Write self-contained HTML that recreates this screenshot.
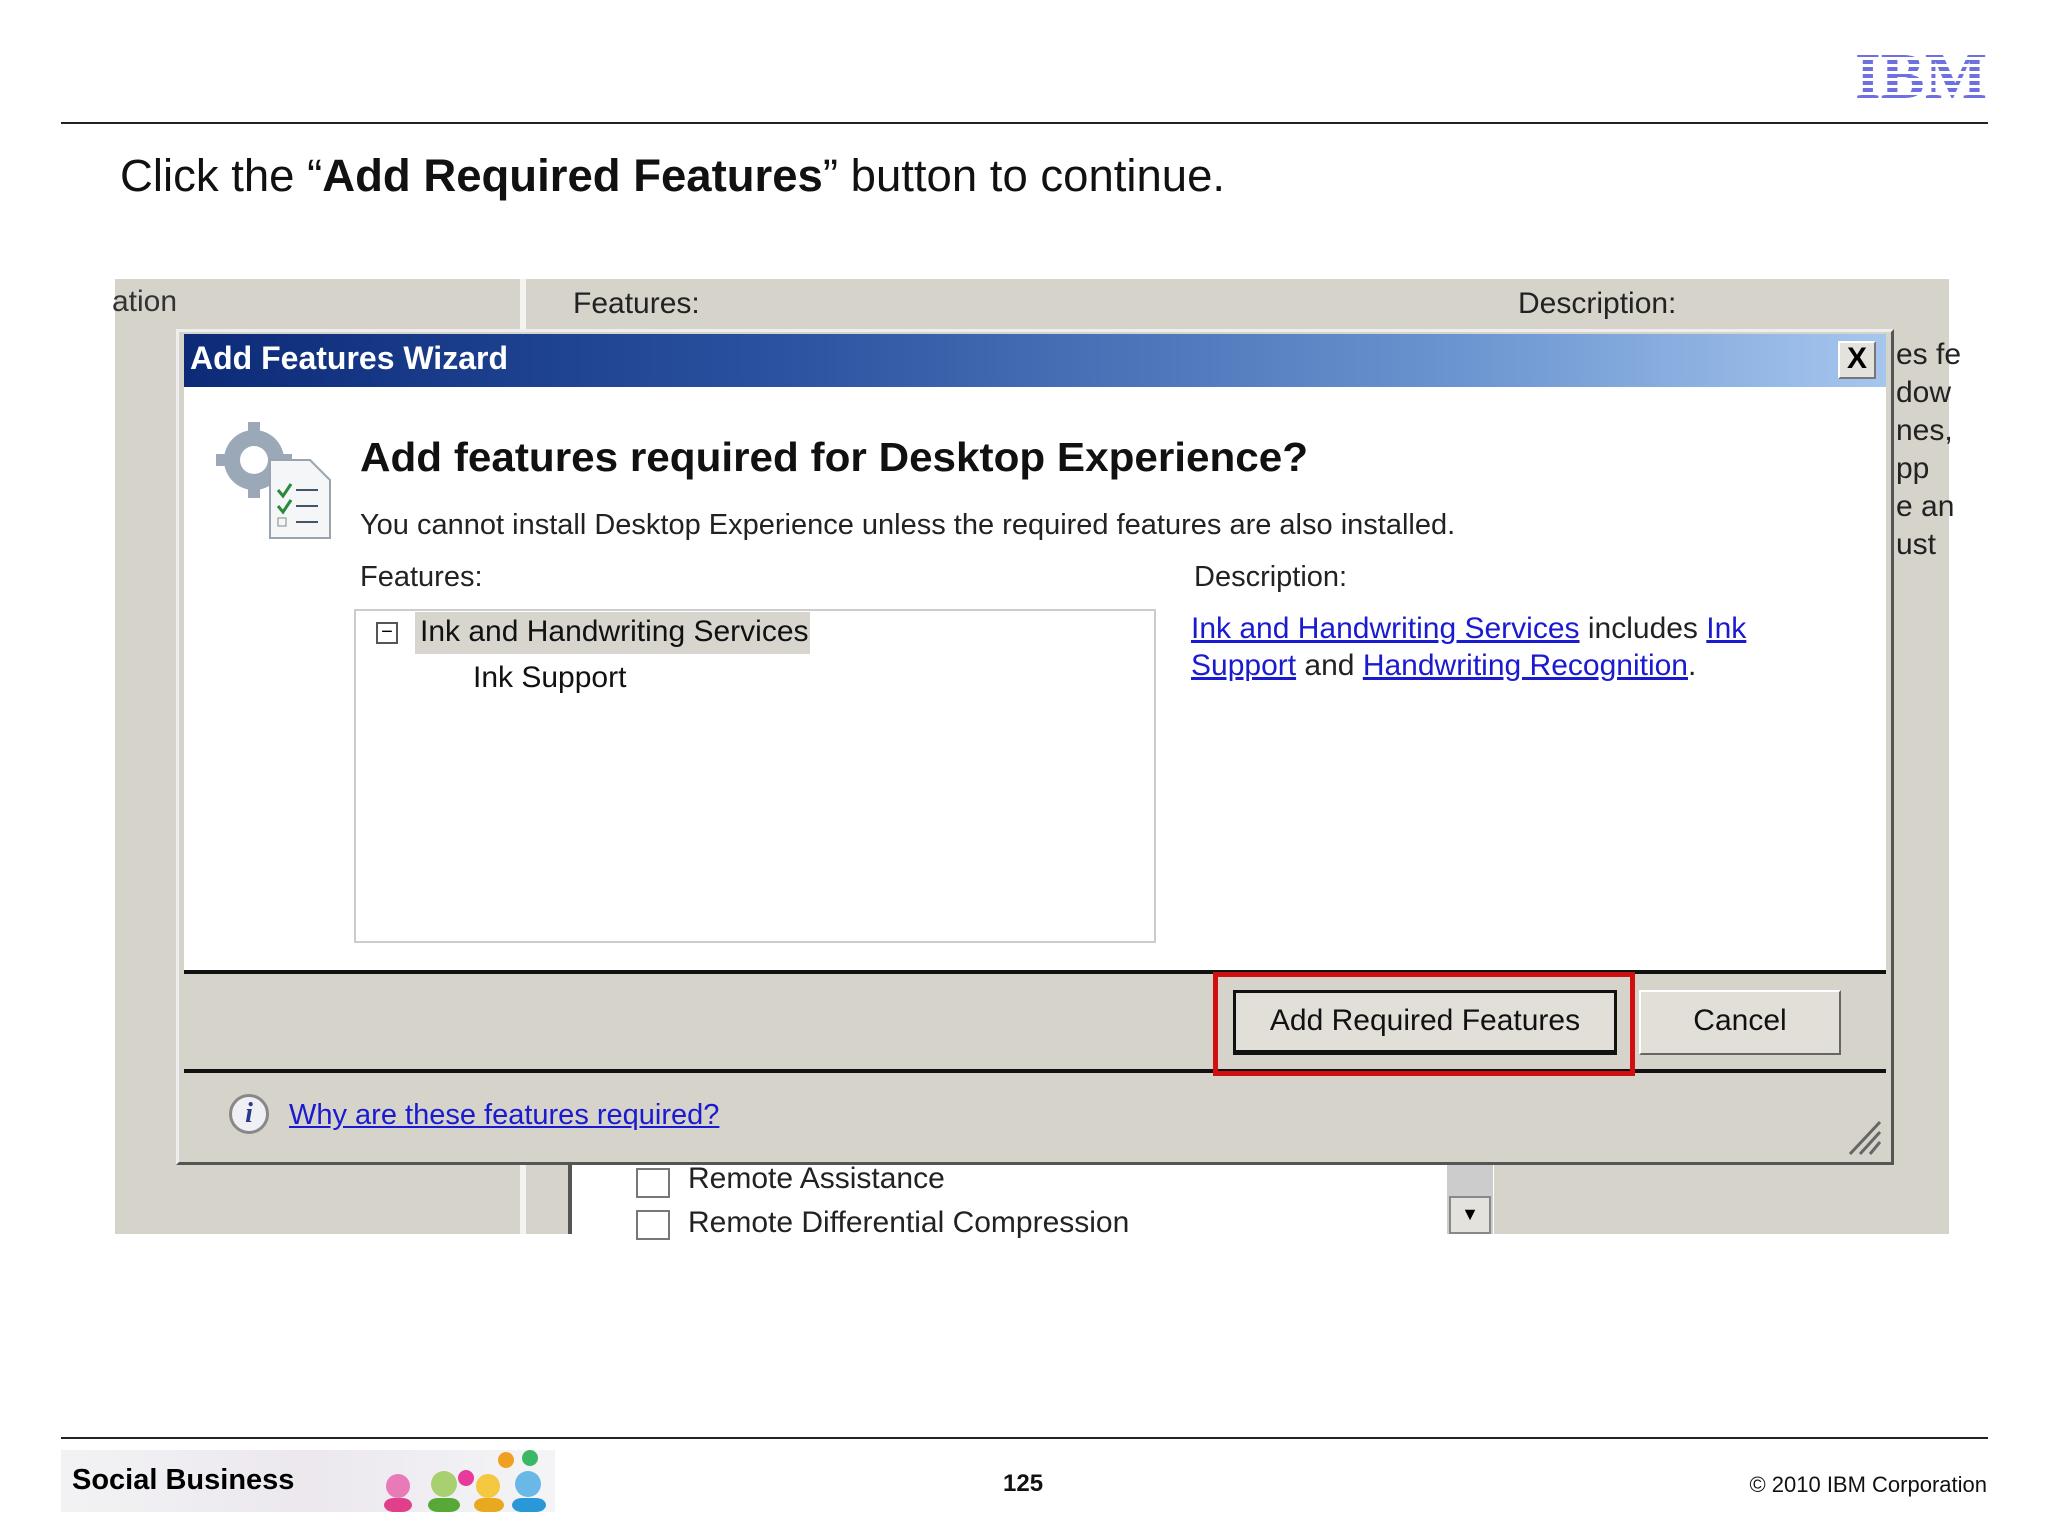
<!DOCTYPE html>
<html><head><meta charset="utf-8"><style>
*{margin:0;padding:0;box-sizing:border-box}
body{width:2048px;height:1536px;background:#fff;position:relative;overflow:hidden;font-family:"Liberation Sans",sans-serif}
.a{position:absolute;white-space:nowrap}
.t{font-family:"Liberation Sans Narrow","Liberation Sans",sans-serif}
.lk{color:#1a1ad0;text-decoration:underline}
</style></head><body>
<!-- IBM logo -->
<div class="a" style="left:1855px;top:46px;font:bold 66px/62px 'Liberation Serif',serif;color:#6e70e2;letter-spacing:0px;transform:scaleX(1.0);transform-origin:left">IBM</div>
<div class="a" style="left:1850px;top:50px;width:145px;height:56px;background:repeating-linear-gradient(#fff 0 3px,transparent 3px 7px)"></div>
<div class="a" style="left:61px;top:122px;width:1927px;height:2px;background:#222"></div>
<div class="a" style="left:120px;top:150px;font-size:45.5px;color:#111">Click the “<b>Add Required Features</b>” button to continue.</div>

<!-- screenshot background -->
<div class="a" style="left:115px;top:279px;width:1834px;height:955px;background:#d6d3cb"></div>
<div class="a" style="left:520px;top:279px;width:6px;height:955px;background:#f4f3ef"></div>
<div class="a t" style="left:112px;top:285px;font-size:30px;color:#333">ation</div>
<div class="a t" style="left:573px;top:287px;font-size:30px;color:#222">Features:</div>
<div class="a t" style="left:1518px;top:287px;font-size:30px;color:#222">Description:</div>
<div class="a t" style="left:1896px;top:336px;font-size:30px;line-height:38px;color:#222;white-space:pre">es fe
dow
nes,
pp
e an
ust</div>
<div class="a" style="left:1890px;top:330px;width:4px;height:230px;background:#555"></div>
<!-- lower list -->
<div class="a" style="left:568px;top:1160px;width:926px;height:74px;background:#fff;border-left:4px solid #555"></div>
<div class="a" style="left:636px;top:1168px;width:34px;height:30px;border:2px solid #777;background:#fff"></div>
<div class="a t" style="left:688px;top:1162px;font-size:30px;color:#222">Remote Assistance</div>
<div class="a" style="left:636px;top:1210px;width:34px;height:30px;border:2px solid #777;background:#fff"></div>
<div class="a t" style="left:688px;top:1206px;font-size:30px;color:#222">Remote Differential Compression</div>
<div class="a" style="left:1447px;top:1160px;width:46px;height:74px;background:#ccc"></div>
<div class="a" style="left:1449px;top:1196px;width:42px;height:38px;background:#e4e2dc;border:2px solid #888;font-size:18px;text-align:center;line-height:32px">▼</div>

<!-- dialog -->
<div class="a" style="left:176px;top:329px;width:1718px;height:836px;background:#d6d3cb;border:3px solid #555;border-top-color:#eee;border-left-color:#eee"></div>
<div class="a" style="left:184px;top:334px;width:1702px;height:53px;background:linear-gradient(90deg,#0c2a78 0%,#2a52a0 35%,#6b95d0 75%,#a6c6ee 100%)"></div>
<div class="a t" style="left:190px;top:340px;font-size:32px;font-weight:bold;color:#fff">Add Features Wizard</div>
<div class="a" style="left:1838px;top:341px;width:38px;height:38px;background:#e4e2dc;border:2px solid #777;border-top-color:#fff;border-left-color:#fff;font:bold 30px/32px 'Liberation Sans',sans-serif;text-align:center">X</div>
<div class="a" style="left:184px;top:387px;width:1702px;height:584px;background:#fff"></div>
<!-- icon -->
<svg class="a" style="left:214px;top:420px" width="120" height="125" viewBox="0 0 120 125">
<circle cx="40" cy="40" r="30" fill="#9aa8b8"/><circle cx="40" cy="40" r="14" fill="#fff"/>
<g fill="#9aa8b8"><rect x="34" y="2" width="12" height="12"/><rect x="34" y="66" width="12" height="12"/><rect x="2" y="34" width="12" height="12"/><rect x="66" y="34" width="12" height="12"/></g>
<path d="M56 40 H96 L116 60 V118 H56 Z" fill="#f4f6f8" stroke="#9aa4b0" stroke-width="2"/>
<path d="M64 70 l5 6 l8 -12 M64 86 l5 6 l8 -12" stroke="#2a8a3a" stroke-width="3" fill="none"/>
<rect x="64" y="98" width="8" height="8" fill="none" stroke="#888"/>
<path d="M82 70 H104 M82 86 H104 M82 102 H104" stroke="#456" stroke-width="2"/>
</svg>
<div class="a t" style="left:360px;top:434px;font-size:41px;font-weight:bold;color:#111;transform:scaleX(1.03);transform-origin:left">Add features required for Desktop Experience?</div>
<div class="a t" style="left:360px;top:509px;font-size:29px;color:#222">You cannot install Desktop Experience unless the required features are also installed.</div>
<div class="a t" style="left:360px;top:561px;font-size:29px;color:#222">Features:</div>
<div class="a t" style="left:1194px;top:561px;font-size:29px;color:#222">Description:</div>
<div class="a" style="left:354px;top:609px;width:802px;height:334px;border:2px solid #ccc;background:#fff"></div>
<div class="a" style="left:376px;top:622px;width:22px;height:22px;border:2px solid #555;font-size:20px;line-height:16px;text-align:center">−</div>
<div class="a" style="left:415px;top:612px;width:395px;height:42px;background:#d8d5ce"></div>
<div class="a t" style="left:420px;top:615px;font-size:30px;color:#111">Ink and Handwriting Services</div>
<div class="a t" style="left:473px;top:661px;font-size:30px;color:#111">Ink Support</div>
<div class="a t" style="left:1191px;top:610px;font-size:30px;line-height:37px;color:#222"><span class="lk">Ink and Handwriting Services</span> includes <span class="lk">Ink</span><br><span class="lk">Support</span> and <span class="lk">Handwriting Recognition</span>.</div>
<div class="a" style="left:184px;top:970px;width:1702px;height:4px;background:#111"></div>
<div class="a" style="left:184px;top:1069px;width:1702px;height:4px;background:#111"></div>
<!-- buttons -->
<div class="a t" style="left:1233px;top:990px;width:384px;height:65px;background:#e2dfd8;border:3px solid #111;border-bottom-width:5px;font-size:30px;line-height:56px;text-align:center;color:#111">Add Required Features</div>
<div class="a t" style="left:1639px;top:990px;width:202px;height:65px;background:#e2dfd8;border:2px solid #666;border-top-color:#fff;border-left-color:#fff;font-size:30px;line-height:58px;text-align:center;color:#111">Cancel</div>
<div class="a" style="left:1213px;top:972px;width:422px;height:104px;border:5px solid #d01010"></div>
<div class="a" style="left:229px;top:1094px;width:40px;height:40px;border:3px solid #888;border-radius:50%;background:#f0f0f4;font:bold italic 28px/34px 'Liberation Serif',serif;text-align:center;color:#2a3a8a">i</div>
<div class="a t" style="left:289px;top:1099px;font-size:29px" ><span class="lk">Why are these features required?</span></div>
<svg class="a" style="left:1846px;top:1116px" width="36" height="40"><path d="M4 38 L34 6 M14 38 L34 16 M24 38 L34 26" stroke="#666" stroke-width="3"/></svg>

<!-- footer -->
<div class="a" style="left:61px;top:1437px;width:1927px;height:2px;background:#222"></div>
<div class="a" style="left:61px;top:1450px;width:494px;height:62px;background:linear-gradient(90deg,#f2f2f4 0%,#ece8ee 50%,#f4f4f6 100%)"></div>
<svg class="a" style="left:370px;top:1450px" width="185" height="62">
<circle cx="28" cy="36" r="12" fill="#e87ab8"/><rect x="14" y="48" width="28" height="14" rx="10" fill="#e0408a"/>
<circle cx="74" cy="34" r="13" fill="#a8d070"/><rect x="58" y="48" width="32" height="14" rx="10" fill="#58a838"/>
<circle cx="118" cy="36" r="12" fill="#f4c840"/><rect x="104" y="48" width="30" height="14" rx="10" fill="#e8a820"/>
<circle cx="158" cy="34" r="13" fill="#6ab8e8"/><rect x="142" y="48" width="34" height="14" rx="10" fill="#2a98d8"/>
<circle cx="96" cy="28" r="8" fill="#e83a9a"/><circle cx="136" cy="10" r="8" fill="#f0a020"/><circle cx="160" cy="8" r="8" fill="#3ab868"/>
</svg>
<div class="a" style="left:72px;top:1464px;font-size:29px;font-weight:bold;color:#000">Social Business</div>
<div class="a" style="left:1003px;top:1470px;font-size:24px;font-weight:bold;color:#111">125</div>
<div class="a" style="right:61px;top:1472px;font-size:22px;color:#111">© 2010 IBM Corporation</div>
</body></html>
